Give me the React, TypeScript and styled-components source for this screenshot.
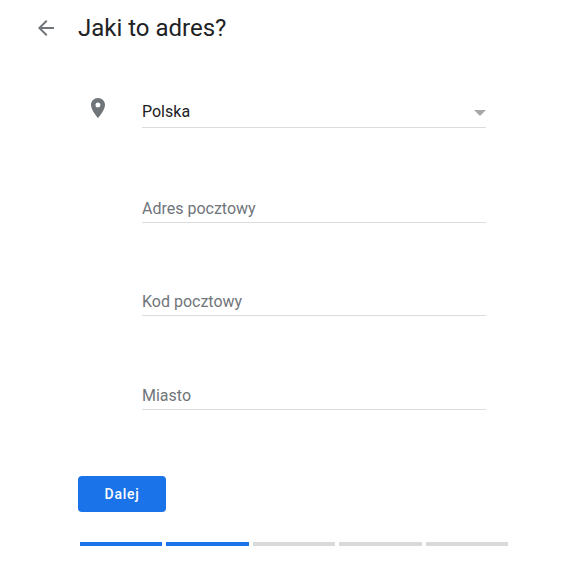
import React from 'react'
import styled, { createGlobalStyle } from 'styled-components'

const GlobalStyle = createGlobalStyle`
  html, body {
    margin: 0;
    background: #fff;
    font-family: Roboto, "Liberation Sans", sans-serif;
  }
`

const Page = styled.div`
  width: 587px;
  height: 576px;
  padding: 12px 0 0 38px;
  box-sizing: border-box;
  overflow: hidden;
`

const Header = styled.div`
  display: flex;
  align-items: center;
  height: 32px;
`

const BackButton = styled.button`
  width: 40px;
  height: 32px;
  padding: 0;
  border: 0;
  background: none;
  display: flex;
  align-items: center;
  color: #70757a;
`

const Title = styled.h1`
  margin: 0;
  font-size: 24px;
  font-weight: 400;
  line-height: 32px;
  color: #202124;
`

const Body = styled.div`
  margin-left: 40px;
`

const Form = styled.div`
  display: flex;
  flex-direction: column;
  margin-top: 49px;
`

const FieldRow = styled.div<{ $gap: number }>`
  display: flex;
  margin-top: ${(p) => p.$gap}px;
`

const IconSlot = styled.div`
  width: 64px;
  flex: none;
  display: flex;
  padding: 3px 0 0 8px;
  box-sizing: border-box;
`

const Field = styled.div`
  width: 344px;
  height: 35px;
  box-sizing: border-box;
  border-bottom: 1px solid #dadce0;
  display: flex;
  align-items: center;
  justify-content: space-between;
  font-size: 16px;
`

const Value = styled.span`
  padding-top: 2px;
  color: #202124;
`

const Placeholder = styled.span`
  padding-top: 6px;
  color: #70757a;
`

const Caret = styled.span`
  width: 0;
  height: 0;
  margin-top: 6px;
  border-left: 6px solid transparent;
  border-right: 6px solid transparent;
  border-top: 6px solid #a8a8a8;
`

const NextButton = styled.button`
  display: block;
  width: 88px;
  height: 36px;
  margin-top: 66px;
  border: 0;
  border-radius: 4px;
  background: #1a73e8;
  color: #fff;
  font-family: Roboto, "Liberation Sans", sans-serif;
  font-size: 14px;
  font-weight: 500;
  letter-spacing: 0.7px;
`

const Progress = styled.div`
  display: grid;
  grid-template-columns: 82px 83px 82px 83px 82px;
  column-gap: 4px;
  margin: 30px 0 0 2px;
`

const Segment = styled.div<{ $done: boolean }>`
  height: 4px;
  background: ${(p) => (p.$done ? '#1a73e8' : '#d9d9dc')};
`

const fields = [
  { label: 'Adres pocztowy', gap: 60 },
  { label: 'Kod pocztowy', gap: 58 },
  { label: 'Miasto', gap: 59 }
]

function App() {
  return (
    <Page>
      <GlobalStyle />
      <Header>
        <BackButton aria-label='Wstecz'>
          <svg width='16' height='16' viewBox='0 0 16 16' fill='currentColor'>
            <path d='M16 7H3.8l5.6-5.6L8 0 0 8l8 8 1.4-1.4L3.8 9H16z' />
          </svg>
        </BackButton>
        <Title>Jaki to adres?</Title>
      </Header>
      <Body>
        <Form>
          <FieldRow $gap={0}>
            <IconSlot>
              <svg width='24' height='24' viewBox='0 0 24 24' fill='#70757a'>
                <path d='M12 2C8.13 2 5 5.13 5 9c0 5.25 7 13 7 13s7-7.75 7-13c0-3.87-3.13-7-7-7zm0 9.5a2.5 2.5 0 1 1 0-5 2.5 2.5 0 0 1 0 5z' />
              </svg>
            </IconSlot>
            <Field>
              <Value>Polska</Value>
              <Caret />
            </Field>
          </FieldRow>
          {fields.map((field) => (
            <FieldRow key={field.label} $gap={field.gap}>
              <IconSlot />
              <Field>
                <Placeholder>{field.label}</Placeholder>
              </Field>
            </FieldRow>
          ))}
        </Form>
        <NextButton>Dalej</NextButton>
        <Progress>
          {[true, true, false, false, false].map((done, i) => (
            <Segment key={i} $done={done} />
          ))}
        </Progress>
      </Body>
    </Page>
  )
}

export default App
